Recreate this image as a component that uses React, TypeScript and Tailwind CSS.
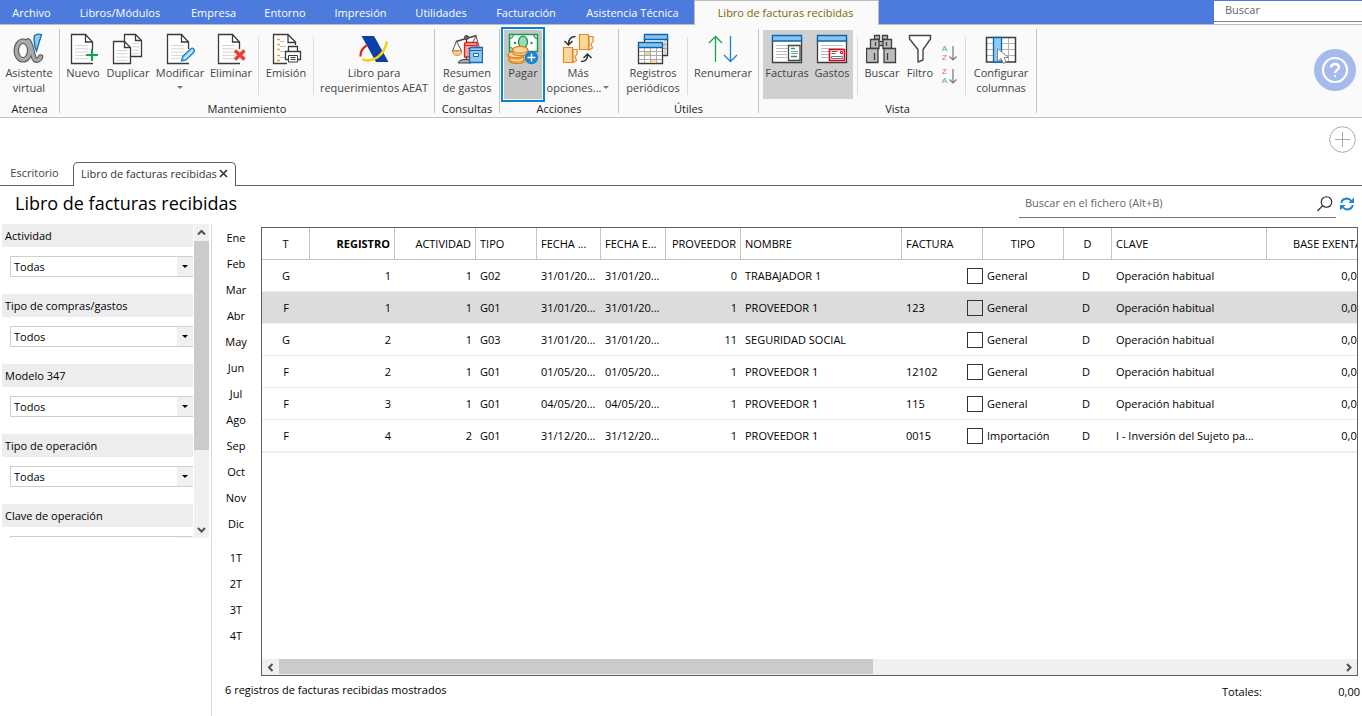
import React from "react";

type Kids = { children?: React.ReactNode };

function Icon({ children }: Kids) {
  return (
    <svg viewBox="0 0 32 32" className="block size-8 shrink-0" fill="none" aria-hidden="true">
      {children}
    </svg>
  );
}

const DARK = "#3b3b3b";

function Lines({ x, y, w, n, gap = 3.3 }: { x: number; y: number; w: number; n: number; gap?: number }) {
  return (
    <>
      {Array.from({ length: n }, (_, i) => (
        <path key={i} d={`M${x} ${y + i * gap}h${w}`} stroke="#d4d4d4" />
      ))}
    </>
  );
}

function Sheet({ x }: { x: number }) {
  return (
    <g transform={`translate(${x} 0)`}>
      <path d="M21.5 16V9L14.5 1.5H.5v29h21.5" fill="#fff" stroke={DARK} strokeWidth="1.3" />
      <path d="M14.5 1.5V9h7" stroke={DARK} strokeWidth="1.3" />
      <Lines x={4} y={12.5} w={13} n={5} />
    </g>
  );
}

const AlphaIcon = () => (
  <Icon>
    {[["#5a5a5a", 5.6], ["#a9a9a9", 3.4]].map(([c, w]) => (
      <g key={c} stroke={c as string} strokeWidth={w}>
        <ellipse cx="10" cy="17.5" rx="6.700" ry="9.3" />
        <path d="M15 8c3.500 2 4 16 7 18.500 2 1.500 5 0 5.500-2.500" strokeLinecap="round" />
      </g>
    ))}
    <path d="M21.500 2.500Q25 .5 28.500 1.500L23.500 18Q20 10 21.500 2.500z" fill="#8fcaf3" stroke="#1a6cae" strokeWidth="1.300" />
  </Icon>
);

const NewIcon = () => (
  <Icon>
    <Sheet x={4} />
    <path d="M25 16v12M19 22h12" stroke="#12a550" strokeWidth="2.200" />
  </Icon>
);

const CopyIcon = () => (
  <Icon>
    <path d="M12.500 9V1.500h11l6 6v16H19" fill="#fff" stroke={DARK} strokeWidth="1.300" />
    <path d="M23.500 1.500v6h6" stroke={DARK} strokeWidth="1.300" />
    <Lines x={20} y={10.5} w={7} n={4} />
    <path d="M1.500 8.500h11l6 6v16h-17z" fill="#fff" stroke={DARK} strokeWidth="1.300" />
    <path d="M12.500 8.500v6h6" stroke={DARK} strokeWidth="1.300" />
    <Lines x={4.5} y={17.5} w={11} n={4} />
  </Icon>
);

const EditIcon = () => (
  <Icon>
    <Sheet x={3} />
    <path d="M17.500 28l1.500-5 8-7.500q2-1 3.300 1 .7 1.500-.5 2.800L22 27z" fill="#9bd0f5" stroke="#1c7fc9" strokeWidth="1.300" />
    <path d="M20 26l8-7.500" stroke="#fff" />
  </Icon>
);

const DeleteIcon = () => (
  <Icon>
    <Sheet x={3} />
    <path d="M20 17.500l9.500 9M29.500 17.500l-9.500 9" stroke="#f03b36" strokeWidth="3.600" />
  </Icon>
);

const PrintIcon = () => (
  <Icon>
    <path d="M25.500 12V9l-7.500-7.500H3.500v29H17" fill="#fff" stroke={DARK} strokeWidth="1.300" />
    <path d="M18 1.500V9.500h7.500" stroke={DARK} strokeWidth="1.300" />
    <path d="M7 6.500h3M7 11.500h3M7 16.500h3M7 22.500h3M7 27.500h3" stroke="#f59a23" strokeWidth="1.300" />
    <path d="M10 8.500h4M10 13.500h6M10 18.500h5M10 24.500h5" stroke="#bdbdbd" />
    <path d="M18.500 18v-4.500h9V18" fill="#fff" stroke={DARK} strokeWidth="1.300" />
    <path d="M15.500 26.500v-8h15v8z" fill="#fff" stroke={DARK} strokeWidth="1.300" />
    <path d="M18.500 22.500h9v6.500h-9zM20.500 24.500h5M20.500 26.500h5" fill="#fff" stroke={DARK} />
  </Icon>
);

const AeatIcon = () => (
  <Icon>
    <path d="M2.500 23.500Q2 17 8.500 12.500" stroke="#e2231a" strokeWidth="2.200" />
    <path d="M3.500 3h12.500l14.500 26H18z" fill="#0b3fa8" />
    <path d="M4.500 26.500C15 30 26 23 29 8.500" stroke="#fdd20a" strokeWidth="2.600" />
  </Icon>
);

const ScaleIcon = () => (
  <Icon>
    <path d="M15.500 2v25M5 8.500l20.500-6" stroke="#444" strokeWidth="1.400" />
    <circle cx="15.500" cy="4.500" r="2" fill="#666" stroke="#444" />
    <path d="M5.500 8L1.500 18h9zM25 3l-4.500 9M25 3l3.500 12" stroke="#555" />
    <path d="M1.500 18h9.500q-.5 4.500-4.700 4.500T1.500 18z" fill="#fbd08a" stroke="#e08a2c" />
    <path d="M7 30q1-3.500 6-3.500h7V30z" fill="#aaa" stroke="#444" />
    <path d="M13.500 11q0-1.500 2-1.500H26v14.500H13.500z" fill="#f7a3a3" stroke="#e02020" strokeWidth="1.300" />
    <path d="M14 12.500h12M17 15.500h6" stroke="#e02020" />
    <path d="M18.500 16q0-1.500 2-1.500h11v15h-13z" fill="#8fc8ef" stroke="#1269b0" strokeWidth="1.300" />
    <path d="M18.500 17.500h12M22.500 20.500h5v3h-5z" fill="#fff" stroke="#1269b0" />
  </Icon>
);

const PayIcon = () => (
  <Icon>
    <path d="M2.500 1.500h28v17h-28z" fill="#fff" stroke="#16984e" strokeWidth="1.500" />
    <path d="M6.500 1.500q0 4-4 4.500V1.500zM26.500 1.500q0 4 4 4.500V1.500zM2.500 14q4 .5 4 4.500h-4z" fill="#9edbb5" stroke="#16984e" />
    <ellipse cx="16" cy="9" rx="4.500" ry="5.800" fill="#9edbb5" stroke="#16984e" strokeWidth="1.300" />
    <circle cx="8" cy="10" r="1.200" fill="#16984e" />
    <circle cx="24.500" cy="10" r="1.200" fill="#16984e" />
    <g fill="#fbd79a" stroke="#dd8425" strokeWidth="1.200">
      <path d="M2 26v1.500C3 31.500 17 31.500 18 27.500V26" />
      <ellipse cx="9.500" cy="26" rx="7.500" ry="3.200" />
      <path d="M1 21v2C2 27 15 27 16.500 23v-2" />
      <ellipse cx="8.800" cy="21.500" rx="7.500" ry="3.200" />
      <path d="M5.500 17v2.500c1 4 14.500 4 15.500 0V17" />
      <ellipse cx="13.200" cy="16.800" rx="7.700" ry="3.400" />
    </g>
    <circle cx="24.500" cy="24.500" r="6.700" fill="#1c84cc" />
    <path d="M24.500 20.500v8M20.500 24.500h8" stroke="#fff" strokeWidth="1.500" />
  </Icon>
);

const MoreIcon = () => (
  <Icon>
    <g fill="#fbd79a" stroke="#e0892c" strokeWidth="1.200">
      <path d="M27 3.500h4v5l-2 2.500 1.500 4-3.500 2z" fill="#fff3df" />
      <path d="M17.500 1.500h9v15h-9z" />
      <path d="M11 16.500h4v4.500l-2 2.500 1.500 4-3.500 2z" fill="#fff3df" />
      <path d="M1.500 14.500h9v15h-9z" />
    </g>
    <path d="M13.500 3.500q-7 0-7 8M2.500 8l4 4 4-4" stroke="#333" strokeWidth="1.500" />
    <path d="M19 28.500q7 0 6.500-7M21.500 25l4-4 4 4" stroke="#333" strokeWidth="1.500" />
  </Icon>
);

const TablesIcon = () => (
  <Icon>
    <path d="M7.500 4h23v18.500h-23z" fill="#fff" stroke={DARK} strokeWidth="1.300" />
    <path d="M26 11.500h4M26 15.500h4M28 7v15" stroke="#aaa" />
    <path d="M7.500 1.500h23v5h-23z" fill="#85c5f3" stroke="#0f64ab" strokeWidth="1.300" />
    <path d="M1.500 12h24v18.500h-24z" fill="#fff" stroke={DARK} strokeWidth="1.300" />
    <path d="M8 19h5v3.500H8zM13.500 26.500h5V30h-5z" fill="#fbd58c" />
    <path d="M2 18.500h23M2 22.500h23M2 26.500h23M7.500 15v15M13.500 15v15M19.500 15v15" stroke="#a9a9a9" />
    <path d="M1.500 9.500h24v5h-24z" fill="#85c5f3" stroke="#0f64ab" strokeWidth="1.300" />
  </Icon>
);

const RenumberIcon = () => (
  <Icon>
    <path d="M8.500 29V3.500M2 10l6.500-6.500L15 10" stroke="#17a650" strokeWidth="1.300" />
    <path d="M23.500 3v25.500M17 22l6.500 6.500L30 22" stroke="#1f84cc" strokeWidth="1.300" />
  </Icon>
);

const WindowBase = () => (
  <>
    <path d="M1.500 5h29v24.500h-29z" fill="#fff" stroke={DARK} strokeWidth="1.300" />
    <path d="M1.500 2.500h29v5.500h-29z" fill="#85c5f3" stroke="#0f64ab" strokeWidth="1.300" />
    <path d="M5 12.500h22M5 15.500h22M5 18.500h11M5 21.500h11M5 24.500h11" stroke="#bdbdbd" />
  </>
);

const InvoicesIcon = () => (
  <Icon>
    <WindowBase />
    <path d="M17.500 12.500h11.500v15H17.500z" fill="#fff" stroke="#444" strokeWidth="1.300" />
    <path d="M20 15.500h4M20 23.500h6" stroke="#17a650" strokeWidth="1.300" />
    <path d="M20 18.500h7M20 20.500h7" stroke="#999" />
  </Icon>
);

const ExpensesIcon = () => (
  <Icon>
    <WindowBase />
    <path d="M13.500 16.500h15v11h-15z" fill="#fff" stroke="#e2001a" strokeWidth="1.600" />
    <path d="M15.500 18.500h6M15.500 20.500h4" stroke="#555" />
    <path d="M24.500 18.500h2v2h-2z" stroke="#e2001a" />
    <path d="M15.500 23.500h11v2h-11z" stroke="#777" />
  </Icon>
);

const BinocularsIcon = () => (
  <Icon>
    <g fill="#bdbdbd" stroke="#3f3f3f" strokeWidth="1.300">
      <path d="M8.500 2.500h5v4h-5zM16.500 2.500h5v4h-5zM12 8.500h6v4h-6z" />
      <path d="M4.500 6.500h8.500v9H4.500zM17 6.500h8.500v9H17z" />
      <path d="M.5 15.500h11.500v14H.5zM18 15.500h11.500v14H18z" />
      <path d="M9.500 9v4M20.500 9v4M8.500 20v7M21.500 20v7" />
    </g>
  </Icon>
);

const FilterIcon = () => (
  <Icon>
    <path d="M5.500 2.500h21v3.500l-7.500 10.500v10.500l-5 2V16.500L5.500 6z" fill="#fff" stroke="#444" strokeWidth="1.400" />
  </Icon>
);

const ColumnsIcon = () => (
  <Icon>
    <path d="M1.500 4.500h29v24.500h-29z" fill="#fff" />
    <path d="M2 10.500h28M2 16.500h28M2 22.500h28M23.500 5v24" stroke="#b5b5b5" />
    <path d="M1.500 4.500h29v24.500h-29z" stroke={DARK} strokeWidth="1.500" />
    <path d="M8.500 4.500h8v24.500h-8z" fill="#8ecbf5" stroke="#0f64ab" strokeWidth="1.300" />
    <path d="M12.500 15.500v13l3.500-3 2.500 5 2.500-1.500-2-4.500h4.500z" fill="#fff" stroke="#888" />
  </Icon>
);

function Tool({ icon, width, lines, menu, className = "" }: {
  icon: React.ReactNode;
  width: string;
  lines: string[];
  menu?: "inline" | "below";
  className?: string;
}) {
  const arrow = <span className="size-0 border-x-3 border-t-3 border-x-transparent border-t-[#777]" />;
  return (
    <button type="button" className={`flex shrink-0 flex-col items-center whitespace-nowrap leading-[15px] text-[#444] ${width} ${className}`}>
      {icon}
      <span>{lines[0]}</span>
      {lines[1] && (
        <span className="flex items-center gap-0.5">
          {lines[1]}
          {menu === "inline" && arrow}
        </span>
      )}
      {menu === "below" && <span className="flex h-[15px] items-center">{arrow}</span>}
    </button>
  );
}

const Sep = ({ className = "" }: { className?: string }) => (
  <span className={`mt-2 h-[58px] w-px shrink-0 bg-[#dcdcdc] ${className}`} />
);

function Group({ name, children }: Kids & { name: string }) {
  return (
    <section className="my-1 flex shrink-0 flex-col border-r border-[#c4c4c4]">
      <div className="flex h-[72px] shrink-0 items-start">{children}</div>
      <h2 className="shrink-0 text-center leading-4 text-[#222]">{name}</h2>
    </section>
  );
}

const PAD = "pt-1";

function SortButton({ letters }: { letters: [string, string] }) {
  return (
    <button type="button" aria-label={`Ordenar ${letters[0]}-${letters[1]}`} className="flex h-5 items-center gap-0.5">
      <span className="flex flex-col font-['Liberation_Sans',sans-serif] text-[8px] leading-[9px]">
        {letters.map((l) => (
          <span key={l} className={l === "A" ? "text-[#3fa0e0]" : "text-[#ee5f5f]"}>{l}</span>
        ))}
      </span>
      <svg width="8" height="15" viewBox="0 0 8 15" fill="none" stroke="#777" strokeWidth="1.200">
        <path d="M4 0v14M.5 10.500L4 14l3.500-3.500" />
      </svg>
    </button>
  );
}

const MENU: [string, string][] = [
  ["Archivo", "w-[63px]"],
  ["Libros/Módulos", "w-[114px]"],
  ["Empresa", "w-[73px]"],
  ["Entorno", "w-[70px]"],
  ["Impresión", "w-[81px]"],
  ["Utilidades", "w-[80px]"],
  ["Facturación", "w-[90px]"],
  ["Asistencia Técnica", "w-[123px]"],
];

function MenuBar() {
  return (
    <nav className="flex h-[25px] shrink-0 justify-between border-b border-[#bdbdbd] bg-[#4c7bdd]">
      <div className="flex">
        {MENU.map(([label, w]) => (
          <button key={label} type="button" className={`${w} shrink-0 whitespace-nowrap pt-0.5 text-white`}>{label}</button>
        ))}
        <button type="button" className="-mb-px w-[185px] shrink-0 whitespace-nowrap border border-b-0 border-[#bdbdbd] bg-[#fafafa] pr-0.5 text-[#8a6300]">
          Libro de facturas recibidas
        </button>
      </div>
      <div className="mt-px w-[148px] bg-white">
        <input aria-label="Buscar" placeholder="Buscar" className="block h-[21px] w-full border-b border-[#808080] bg-white px-[11px] pb-1 placeholder:text-[#666] placeholder:opacity-100" />
      </div>
    </nav>
  );
}

function Ribbon() {
  return (
    <header className="flex h-[93px] shrink-0 items-stretch border-b border-[#c4c4c4] bg-[#fafafa]">
      <Group name="Atenea">
        <Tool icon={<AlphaIcon />} width="w-[58px]" lines={["Asistente", "virtual"]} className={`${PAD} mr-px`} />
      </Group>
      <Group name="Mantenimiento">
        <Tool icon={<NewIcon />} width="w-[44px]" lines={["Nuevo"]} className={`${PAD} ml-px`} />
        <Tool icon={<CopyIcon />} width="w-[46px]" lines={["Duplicar"]} className={PAD} />
        <Tool icon={<EditIcon />} width="w-[58px]" lines={["Modificar"]} menu="below" className={PAD} />
        <Tool icon={<DeleteIcon />} width="w-[44px]" lines={["Eliminar"]} className={PAD} />
        <Sep className="ml-[5px]" />
        <Tool icon={<PrintIcon />} width="w-[54px]" lines={["Emisión"]} className={PAD} />
        <Sep />
        <Tool icon={<AeatIcon />} width="w-[120px]" lines={["Libro para", "requerimientos AEAT"]} className={PAD} />
      </Group>
      <Group name="Consultas">
        <Tool icon={<ScaleIcon />} width="w-[64px]" lines={["Resumen", "de gastos"]} className={PAD} />
      </Group>
      <Group name="Acciones">
        <Tool
          icon={<PayIcon />}
          width="w-[44px]"
          lines={["Pagar"]}
          className="-mt-0.5 ml-px h-[75px] border-2 border-[#0a82cc] bg-[#c6c6c6] pt-1 inset-ring inset-ring-white"
        />
        <Tool icon={<MoreIcon />} width="w-[66px]" lines={["Más", "opciones..."]} menu="inline" className={`${PAD} mr-[7px]`} />
      </Group>
      <Group name="Útiles">
        <Tool icon={<TablesIcon />} width="w-[68px]" lines={["Registros", "periódicos"]} className={PAD} />
        <Sep />
        <Tool icon={<RenumberIcon />} width="w-[70px]" lines={["Renumerar"]} className={PAD} />
      </Group>
      <Group name="Vista">
        <div className="ml-1 mt-px flex h-[69px] bg-[#d0d0d0]">
          <Tool icon={<InvoicesIcon />} width="w-[48px]" lines={["Facturas"]} className="pt-[3px]" />
          <Tool icon={<ExpensesIcon />} width="w-[42px]" lines={["Gastos"]} className="pt-[3px]" />
        </div>
        <Sep className="ml-1" />
        <Tool icon={<BinocularsIcon />} width="w-[48px]" lines={["Buscar"]} className={PAD} />
        <Tool icon={<FilterIcon />} width="w-[28px]" lines={["Filtro"]} className={PAD} />
        <div className="flex w-[31px] flex-col items-center gap-[3px] pt-[14px]">
          <SortButton letters={["A", "Z"]} />
          <SortButton letters={["Z", "A"]} />
        </div>
        <Sep />
        <Tool icon={<ColumnsIcon />} width="w-[70px]" lines={["Configurar", "columnas"]} className={PAD} />
      </Group>
      <div className="flex flex-1 items-center justify-end pr-1.5">
        <button type="button" aria-label="Ayuda" className="mb-0.5 size-[42px] rounded-full bg-[#a6bbec]">
          <svg viewBox="0 0 42 42" fill="none" stroke="#fff">
            <circle cx="21" cy="21" r="12" strokeWidth="2.200" />
            <path d="M17 18.500q.3-3.500 4-3.500t4 3.300c0 3-4 2.700-4 5.700" strokeWidth="2.300" />
            <circle cx="21" cy="27" r=".7" fill="#fff" />
          </svg>
        </button>
      </div>
    </header>
  );
}

function TabStrip() {
  return (
    <div className="flex h-[68px] shrink-0 items-stretch justify-between">
      <div className="flex items-end">
        <button type="button" className="h-[24px] w-[73px] border-b border-[#5f5f5f] pb-0.5 pr-1 text-[#444]">Escritorio</button>
        <div className="flex h-[24px] w-[163px] items-center justify-between whitespace-nowrap rounded-t-[5px] border border-b-0 border-[#5f5f5f] px-[7px] pb-0.5 text-[#333]">
          Libro de facturas recibidas
          <button type="button" aria-label="Cerrar">
            <svg width="9" height="9" viewBox="0 0 9 9" stroke="#333" strokeWidth="1.600">
              <path d="M1 1l7 7M8 1L1 8" />
            </svg>
          </button>
        </div>
      </div>
      <div className="flex flex-1 justify-end border-b border-[#5f5f5f] pr-1.5 pt-2">
        <button type="button" aria-label="Añadir" className="size-[27px]">
          <svg viewBox="0 0 27 27" fill="none" stroke="#aaa">
            <circle cx="13.500" cy="13.500" r="12.800" />
            <path d="M13.500 6v15M6 13.500h15" />
          </svg>
        </button>
      </div>
    </div>
  );
}

function TitleRow() {
  return (
    <div className="flex h-[38px] shrink-0 items-start justify-between">
      <h1 className="pl-[15px] text-[18px] leading-[34px] text-black">Libro de facturas recibidas</h1>
      <div className="flex items-center pr-2 pt-1">
        <div className="flex h-7 w-[317px] items-center border-b border-[#777] pr-[3px]">
          <input
            aria-label="Buscar en el fichero"
            placeholder="Buscar en el fichero (Alt+B)"
            className="h-full min-w-0 flex-1 bg-transparent pb-0.5 pl-1.5 placeholder:text-[#666] placeholder:opacity-100"
          />
          <svg width="16" height="16" viewBox="0 0 16 16" fill="none" stroke="#222" strokeWidth="1.100">
            <circle cx="9.500" cy="6" r="5.300" />
            <path d="M5.700 9.700L.5 15" />
          </svg>
        </div>
        <button type="button" aria-label="Actualizar" className="ml-1">
          <svg width="14" height="14" viewBox="0 0 14 14" fill="none" stroke="#2187c9" strokeWidth="2">
            <path d="M1.200 6Q2 2 6.500 1.500q3 0 5 2.500M12.800 8q-.8 4-5.300 4.500-3 0-5-2.500" />
            <path d="M14 .5V6H8.500zM0 13.500V8h5.500z" fill="#2187c9" stroke="none" />
          </svg>
        </button>
      </div>
    </div>
  );
}

const FILTERS = [
  ["Actividad", "Todas"],
  ["Tipo de compras/gastos", "Todos"],
  ["Modelo 347", "Todos"],
  ["Tipo de operación", "Todas"],
  ["Clave de operación", "Todas"],
];

const Chevron = ({ d }: { d: string }) => (
  <svg width="9" height="9" viewBox="0 0 9 9" fill="none" stroke="#505050" strokeWidth="2">
    <path d={d} />
  </svg>
);

function Filters() {
  return (
    <aside className="flex w-[212px] shrink-0 items-start border-r border-[#d9d9d9] pl-0.5">
      <div className="h-[314px] w-[191px] overflow-hidden">
        {FILTERS.map(([label, value], i) => (
          <div key={label} className="h-[70px]">
            <label htmlFor={`filter-${i}`} className="flex h-[23px] items-center bg-[#ededed] pl-[3px] text-black">{label}</label>
            <div className="relative ml-2 mt-[9px]">
              <select id={`filter-${i}`} className="block h-[21px] w-full appearance-none border border-r-0 border-[#cfcfcf] bg-white pl-[3px] text-black">
                <option>{value}</option>
              </select>
              <span className="pointer-events-none absolute inset-y-px right-0 flex w-4 items-center justify-center bg-[#f0f0f0]">
                <span className="size-0 border-x-3 border-t-3 border-x-transparent border-t-black" />
              </span>
            </div>
          </div>
        ))}
      </div>
      <div className="ml-px flex h-[314px] w-[15px] flex-col items-center bg-[#f0f0f0]">
        <span className="flex h-[17px] shrink-0 items-center"><Chevron d="M1 6.500L4.500 3 8 6.500" /></span>
        <span className="h-[209px] w-full bg-[#cbcbcb]" />
        <span className="mt-auto flex h-[17px] items-center"><Chevron d="M1 3l3.500 3.500L8 3" /></span>
      </div>
    </aside>
  );
}

const MONTHS = ["Ene", "Feb", "Mar", "Abr", "May", "Jun", "Jul", "Ago", "Sep", "Oct", "Nov", "Dic"];
const QUARTERS = ["1T", "2T", "3T", "4T"];

function Periods() {
  return (
    <div className="flex w-[49px] shrink-0 flex-col items-stretch gap-2 pr-px pt-px text-black">
      {[MONTHS, QUARTERS].map((list) => (
        <div key={list[0]} className="flex flex-col">
          {list.map((p) => (
            <button key={p} type="button" className="h-[26px]">{p}</button>
          ))}
        </div>
      ))}
    </div>
  );
}

const COLUMNS: { name: string; width: string; align: string; bold?: boolean }[] = [
  { name: "T", width: "w-[48px]", align: "text-center" },
  { name: "REGISTRO", width: "w-[85px]", align: "text-right", bold: true },
  { name: "ACTIVIDAD", width: "w-[81px]", align: "text-right" },
  { name: "TIPO", width: "w-[61px]", align: "text-left" },
  { name: "FECHA ...", width: "w-[64px]", align: "text-left" },
  { name: "FECHA E...", width: "w-[65px]", align: "text-left" },
  { name: "PROVEEDOR", width: "w-[75px]", align: "text-right" },
  { name: "NOMBRE", width: "w-[161px]", align: "text-left" },
  { name: "FACTURA", width: "w-[81px]", align: "text-left" },
  { name: "TIPO", width: "w-[81px]", align: "text-center" },
  { name: "D", width: "w-[48px]", align: "text-center" },
  { name: "CLAVE", width: "w-[155px]", align: "text-left" },
  { name: "BASE EXENTA", width: "w-[100px]", align: "text-right" },
];

const ROWS = [
  ["G", "1", "1", "G02", "31/01/20...", "31/01/20...", "0", "TRABAJADOR 1", "", "General", "D", "Operación habitual", "0,00"],
  ["F", "1", "1", "G01", "31/01/20...", "31/01/20...", "1", "PROVEEDOR 1", "123", "General", "D", "Operación habitual", "0,00"],
  ["G", "2", "1", "G03", "31/01/20...", "31/01/20...", "11", "SEGURIDAD SOCIAL", "", "General", "D", "Operación habitual", "0,00"],
  ["F", "2", "1", "G01", "01/05/20...", "01/05/20...", "1", "PROVEEDOR 1", "12102", "General", "D", "Operación habitual", "0,00"],
  ["F", "3", "1", "G01", "04/05/20...", "04/05/20...", "1", "PROVEEDOR 1", "115", "General", "D", "Operación habitual", "0,00"],
  ["F", "4", "2", "G01", "31/12/20...", "31/12/20...", "1", "PROVEEDOR 1", "0015", "Importación", "D", "I - Inversión del Sujeto pa...", "0,00"],
];

function cellClass(i: number) {
  if (i === 8) return "pl-1 pr-0 text-left";
  if (i === 9) return "px-1 text-left";
  if (i === 10) return "pl-1 pr-2 text-center";
  return `px-1 ${COLUMNS[i].align}`;
}

function Invoices() {
  return (
    <div className="mt-[3px] flex min-h-0 min-w-0 flex-1 flex-col border border-[#5f5f5f]">
      <div className="flex-1 overflow-hidden">
        <table className="w-[1105px] table-fixed border-separate border-spacing-0 whitespace-nowrap border-b border-[#ededed] text-black">
          <thead>
            <tr className="h-8">
              {COLUMNS.map((c, i) => (
                <th key={i} className={`${c.width} ${c.align} ${c.bold ? "font-bold" : "font-normal"} border-b border-r border-[#c4c4c4] px-1 py-0`}>
                  {c.name}
                </th>
              ))}
            </tr>
          </thead>
          <tbody>
            {ROWS.map((row, r) => (
              <tr key={r} className={r === 1 ? "h-8 bg-[#dcdcdc]" : "h-8"}>
                {row.map((v, i) => (
                  <td key={i} className={`border-b border-[#ededed] py-0 ${cellClass(i)}`}>
                    {i === 8 ? (
                      <div className="flex items-center justify-between">
                        <span>{v}</span>
                        <input type="checkbox" aria-label={`Seleccionar registro ${row[1]} ${row[7]}`} className="size-4 appearance-none border border-[#333]" />
                      </div>
                    ) : v}
                  </td>
                ))}
              </tr>
            ))}
          </tbody>
        </table>
      </div>
      <div className="flex h-4 shrink-0 items-stretch bg-[#f0f0f0]">
        <span className="flex w-[17px] items-center justify-center"><Chevron d="M6.500 1L3 4.500 6.500 8" /></span>
        <span className="flex flex-1"><span className="mb-px w-[56%] bg-[#cbcbcb]" /></span>
        <span className="flex w-[17px] items-center justify-center"><Chevron d="M3 1l3.500 3.500L3 8" /></span>
      </div>
    </div>
  );
}

export default function App() {
  return (
    <div className="flex h-screen min-h-[600px] flex-col overflow-hidden bg-white font-['Open_Sans','Noto_Sans',sans-serif] text-[11px] leading-4">
      <MenuBar />
      <Ribbon />
      <TabStrip />
      <TitleRow />
      <main className="flex min-h-0 flex-1">
        <Filters />
        <div className="flex min-w-0 flex-1 flex-col">
          <div className="flex min-h-0 flex-1">
            <Periods />
            <div className="flex min-w-0 flex-1 pr-1">
              <Invoices />
            </div>
          </div>
          <footer className="flex h-10 shrink-0 items-start justify-between pl-[13px] pr-0.5 pt-1.5 text-black">
            <span>6 registros de facturas recibidas mostrados</span>
            <span className="flex w-[138px] justify-between pt-0.5">
              <span>Totales:</span>
              <span>0,00</span>
            </span>
          </footer>
        </div>
      </main>
    </div>
  );
}
